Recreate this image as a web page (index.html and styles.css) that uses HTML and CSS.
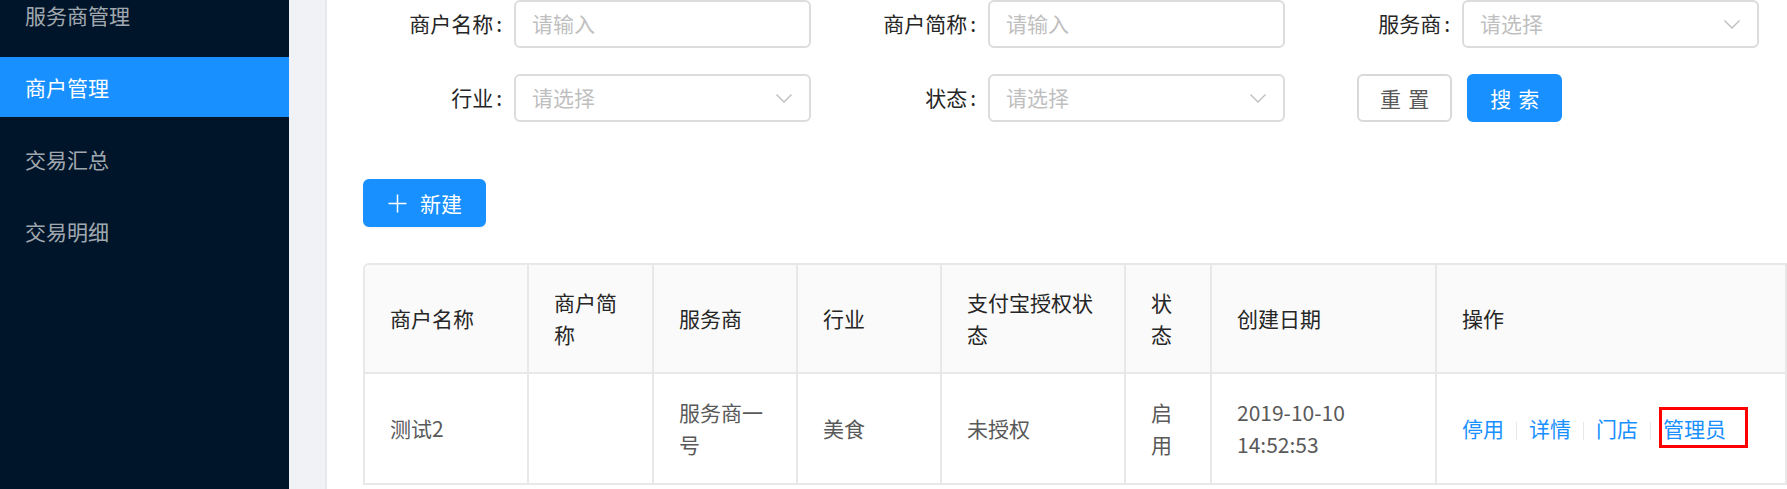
FILE: index.html
```html
<!DOCTYPE html>
<html>
<head>
    <meta charset="UTF-8">
    <title>商户管理</title>
    <link rel="stylesheet" href="styles.css">
</head>
<body>
    <div class="layout">
        <!-- left navigation -->
        <aside class="sider">
            <ul class="menu">
                <li class="menu-item">服务商管理</li>
                <li class="menu-item active">商户管理</li>
                <li class="menu-item">交易汇总</li>
                <li class="menu-item">交易明细</li>
            </ul>
        </aside>

        <main class="main">
            <div class="card">
                <!-- search form -->
                <form class="search">
                    <div class="field">
                        <label class="field-label">商户名称<span class="colon">:</span></label>
                        <div class="input"><span class="placeholder">请输入</span></div>
                    </div>
                    <div class="field">
                        <label class="field-label">商户简称<span class="colon">:</span></label>
                        <div class="input"><span class="placeholder">请输入</span></div>
                    </div>
                    <div class="field">
                        <label class="field-label">服务商<span class="colon">:</span></label>
                        <div class="input select">
                            <span class="placeholder">请选择</span>
                            <svg class="arrow" width="18" height="18" viewBox="0 0 18 18"><polyline points="1.5,5.5 9,13 16.5,5.5" fill="none" stroke="#bfbfbf" stroke-width="1.4"/></svg>
                        </div>
                    </div>
                    <div class="field">
                        <label class="field-label">行业<span class="colon">:</span></label>
                        <div class="input select">
                            <span class="placeholder">请选择</span>
                            <svg class="arrow" width="18" height="18" viewBox="0 0 18 18"><polyline points="1.5,5.5 9,13 16.5,5.5" fill="none" stroke="#bfbfbf" stroke-width="1.4"/></svg>
                        </div>
                    </div>
                    <div class="field">
                        <label class="field-label">状态<span class="colon">:</span></label>
                        <div class="input select">
                            <span class="placeholder">请选择</span>
                            <svg class="arrow" width="18" height="18" viewBox="0 0 18 18"><polyline points="1.5,5.5 9,13 16.5,5.5" fill="none" stroke="#bfbfbf" stroke-width="1.4"/></svg>
                        </div>
                    </div>
                    <div class="field actions">
                        <button type="button" class="btn"><span class="two-chars">重置</span></button>
                        <button type="button" class="btn btn-primary"><span class="two-chars">搜索</span></button>
                    </div>
                </form>

                <div class="toolbar">
                    <button type="button" class="btn btn-primary btn-icon">
                        <svg width="21" height="21" viewBox="0 0 21 21"><path d="M10.5 1.5v18M1.5 10.5h18" stroke="#fff" stroke-width="1.5"/></svg>
                        <span>新建</span>
                    </button>
                </div>

                <!-- merchant list -->
                <table class="table">
                    <colgroup>
                        <col style="width: 164px">
                        <col style="width: 125px">
                        <col style="width: 144px">
                        <col style="width: 144px">
                        <col style="width: 184px">
                        <col style="width: 86px">
                        <col style="width: 225px">
                        <col>
                    </colgroup>
                    <thead>
                        <tr>
                            <th>商户名称</th>
                            <th>商户简称</th>
                            <th>服务商</th>
                            <th>行业</th>
                            <th>支付宝授权状态</th>
                            <th>状态</th>
                            <th>创建日期</th>
                            <th>操作</th>
                        </tr>
                    </thead>
                    <tbody>
                        <tr>
                            <td>测试2</td>
                            <td></td>
                            <td>服务商一号</td>
                            <td>美食</td>
                            <td>未授权</td>
                            <td>启用</td>
                            <td>2019-10-10 14:52:53</td>
                            <td class="ops">
                                <a class="link">停用</a><span class="divider"></span><a class="link">详情</a><span class="divider"></span><a class="link">门店</a><span class="divider"></span><a class="link marked">管理员</a>
                            </td>
                        </tr>
                    </tbody>
                </table>
            </div>
        </main>
    </div>
</body>
</html>
```

FILE: styles.css
```css
/* Base page */
body {
    margin: 0;
    font-family: "Noto Sans CJK SC", "Noto Sans", sans-serif;
    font-size: 21px;
    line-height: 1.5;
    color: #595959;
    overflow: hidden;
}

.layout {
    display: flex;
    height: 489px;
}

/* Sidebar menu */
.sider {
    width: 289px;
    flex-shrink: 0;
    background-color: #001529;
}

.menu {
    list-style: none;
    margin: -15px 0 0;
    padding: 0;
}

.menu-item {
    height: 60px;
    line-height: 60px;
    padding-left: 25px;
    margin-bottom: 12px;
    color: rgba(255, 255, 255, 0.65);
}

.menu-item.active {
    background-color: #1890ff;
    color: #fff;
}

/* Content area */
.main {
    flex: 1;
    display: flex;
    background-color: #f0f2f5;
    padding-left: 36px;
}

.card {
    flex: 1;
    background-color: #fff;
    border-left: 2px solid #e6e8eb;
    padding-left: 36px;
}

/* Search form */
.search {
    display: grid;
    grid-template-columns: 448px 448px 448px;
    column-gap: 26px;
    row-gap: 26px;
}

.field {
    display: flex;
    align-items: center;
    height: 48px;
}

.field-label {
    width: 151px;
    box-sizing: border-box;
    padding-right: 12px;
    text-align: right;
    color: #262626;
}

.colon {
    margin-left: 3px;
}

.input {
    width: 297px;
    height: 48px;
    box-sizing: border-box;
    border: 2px solid #dcdcdc;
    border-radius: 6px;
    padding: 0 16px;
    display: flex;
    align-items: center;
    justify-content: space-between;
}

.placeholder {
    color: #bfbfbf;
}

.actions {
    padding-left: 46px;
    gap: 15px;
}

/* Buttons */
.btn {
    height: 48px;
    box-sizing: border-box;
    padding: 0 21px;
    border: 2px solid #d9d9d9;
    border-radius: 6px;
    background-color: #fff;
    color: #595959;
    font-family: inherit;
    font-size: 21px;
    display: inline-flex;
    align-items: center;
}

.btn-primary {
    background-color: #1890ff;
    border-color: #1890ff;
    color: #fff;
}

.two-chars {
    letter-spacing: 0.34em;
    margin-right: -0.34em;
}

.toolbar {
    margin: 57px 0 36px;
}

.btn-icon {
    padding: 0 22px;
    gap: 12px;
    box-shadow: 0 2px 0 rgba(0, 0, 0, 0.03);
}

/* Table */
.table {
    width: 100%;
    table-layout: fixed;
    border-collapse: separate;
    border-spacing: 0;
    border-top: 2px solid #e8e8e8;
    border-left: 2px solid #e8e8e8;
    border-top-left-radius: 6px;
    line-height: 31.5px;
}

.table th,
.table td {
    border-right: 2px solid #e8e8e8;
    border-bottom: 2px solid #e8e8e8;
    text-align: left;
    vertical-align: middle;
    word-break: break-all;
}

.table th {
    padding: 22px 25px;
    background-color: #fafafa;
    color: #262626;
    font-weight: 400;
}

.table th:first-child {
    border-top-left-radius: 6px;
}

.table td {
    padding: 23px 25px;
    color: #595959;
}

.table td:nth-child(7) {
    word-break: normal;
}

.ops {
    white-space: nowrap;
}

.link {
    color: #1890ff;
    cursor: pointer;
}

.divider {
    display: inline-block;
    width: 1px;
    height: 0.9em;
    margin: 0 12px;
    background-color: #e8e8e8;
    vertical-align: middle;
}

/* red annotation box round the last action */
.marked {
    position: relative;
}

.marked::after {
    content: "";
    position: absolute;
    left: -4px;
    right: -22px;
    top: -6px;
    bottom: -5px;
    border: 3px solid #ff0000;
}
```
